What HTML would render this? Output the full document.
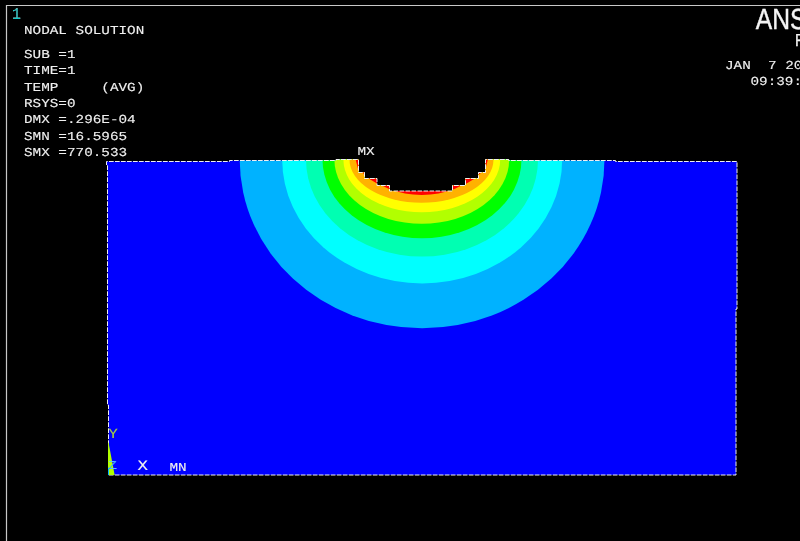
<!DOCTYPE html>
<html><head><meta charset="utf-8">
<style>
html,body{margin:0;padding:0;background:#000;width:800px;height:541px;overflow:hidden}
svg{display:block;will-change:transform}
text{white-space:pre;text-rendering:geometricPrecision}
.m{font-family:"Liberation Mono",monospace;fill:#f0f0f0;stroke:#f0f0f0;stroke-width:0.12px}
.s{font-family:"Liberation Sans",sans-serif;fill:#f4f4f4}
</style></head><body>
<svg width="800" height="541" viewBox="0 0 800 541">
<rect x="0" y="0" width="800" height="541" fill="#000"/>
<path d="M6.5 541 V5.5 H800" fill="none" stroke="#c8c8c8" stroke-width="1.2"/>
<defs><clipPath id="body"><path d="M108.5 475 V405 H107.5 V165 H106.5 V161.5 H229.5 V160.5 H336 V159.5 H358.5 V172.5 H364.5 V178.5 H377 V185.5 H389.5 V191 H452.5 V185.5 H465.5 V178.5 H478.5 V172.5 H485.5 V159.5 H508.7 V160.5 H615.5 V161.5 H737 V309 H736 V475 Z"/></clipPath></defs>
<g clip-path="url(#body)">
<rect x="100" y="150" width="650" height="340" fill="#0000ff"/>
<ellipse cx="422.1" cy="159.5" rx="182.4" ry="168.8" fill="#00b2ff"/>
<ellipse cx="422.2" cy="159.5" rx="140.0" ry="124.0" fill="#00ffff"/>
<ellipse cx="422.0" cy="159.5" rx="116.0" ry="97.1" fill="#00ffb2"/>
<ellipse cx="422.0" cy="159.5" rx="99.5" ry="78.8" fill="#00ff00"/>
<ellipse cx="421.8" cy="159.5" rx="87.4" ry="64.3" fill="#b2ff00"/>
<ellipse cx="421.8" cy="159.5" rx="78.4" ry="52.7" fill="#ffff00"/>
<ellipse cx="421.5" cy="159.5" rx="72.0" ry="43.2" fill="#ffb200"/>
<path d="M355.50 159.00 L358.30 170.00 L362.00 172.40 L364.60 174.50 L369.00 178.70 L377.00 183.50 L382.00 185.40 L389.00 189.00 L397.00 191.60 L405.00 193.40 L413.00 194.50 L421.75 195.00 L430.50 194.50 L438.50 193.40 L446.50 191.60 L454.50 189.00 L461.50 185.40 L466.50 183.50 L474.50 178.70 L478.90 174.50 L481.50 172.40 L485.20 170.00 L488.00 159.00 Z" fill="#ff0000"/>
</g>
<path d="M108.5 475 V405 H107.5 V165 H106.5 V161.5 H229.5 V160.5 H336 V159.5 H358.5 V172.5 H364.5 V178.5 H377 V185.5 H389.5 V191 H452.5 V185.5 H465.5 V178.5 H478.5 V172.5 H485.5 V159.5 H508.7 V160.5 H615.5 V161.5 H737 V309 H736 V475 Z" fill="none" stroke="#f0f0f0" stroke-width="1" stroke-dasharray="4.7 1.3"/>
<path d="M108 442.8 H108.6 L114.6 475 H108 Z" fill="#b2ff00"/>
<path d="M108.5 467.8 V475" stroke="#00b2ff" stroke-width="1"/>
<text class="m" style="fill:#10c8c8" font-size="16.5" transform="translate(12,19.2) scale(0.9,1)">1</text>
<text class="m" font-size="12.2" transform="translate(24.0,34) scale(1.1749,1.0)">NODAL SOLUTION</text>
<text class="m" font-size="12.2" transform="translate(24.0,58) scale(1.1749,1.0)">SUB =1</text>
<text class="m" font-size="12.2" transform="translate(24.0,74) scale(1.1749,1.0)">TIME=1</text>
<text class="m" font-size="12.2" transform="translate(24.0,91) scale(1.1749,1.0)">TEMP     (AVG)</text>
<text class="m" font-size="12.2" transform="translate(24.0,107) scale(1.1749,1.0)">RSYS=0</text>
<text class="m" font-size="12.2" transform="translate(24.0,123) scale(1.1749,1.0)">DMX =.296E-04</text>
<text class="m" font-size="12.2" transform="translate(24.0,140) scale(1.1749,1.0)">SMN =16.5965</text>
<text class="m" font-size="12.2" transform="translate(24.0,156) scale(1.1749,1.0)">SMX =770.533</text>
<text class="s" font-size="29" stroke="#f4f4f4" stroke-width="0.4" transform="translate(755.8,28.7) scale(0.85,1)">ANSYS</text>
<text class="s" font-size="17.4" stroke="#f4f4f4" stroke-width="0.3" transform="translate(795,45.8) scale(0.85,1)">R15.0</text>
<text class="m" font-size="12.2" transform="translate(725,69) scale(1.1749,1.0)">JAN  7 2017</text>
<text class="m" font-size="12.2" transform="translate(750.5,85) scale(1.1749,1.0)">09:39:52</text>
<text class="m" font-size="12.2" transform="translate(357.5,155) scale(1.1749,1.0)">MX</text>
<text class="m" font-size="12.2" transform="translate(169.5,471) scale(1.1749,1.0)">MN</text>
<text class="m" style="fill:#a8d040;stroke:#a8d040" font-size="14" transform="translate(108.6,438) scale(1.1,1)">Y</text>
<text class="m" style="fill:#20a0ff" font-size="12.2" transform="translate(108.3,469.3) scale(1.1749,1.0)">Z</text>
<text class="m" font-size="14.5" transform="translate(137.5,470) scale(1.2,1)">X</text>
</svg>
</body></html>
